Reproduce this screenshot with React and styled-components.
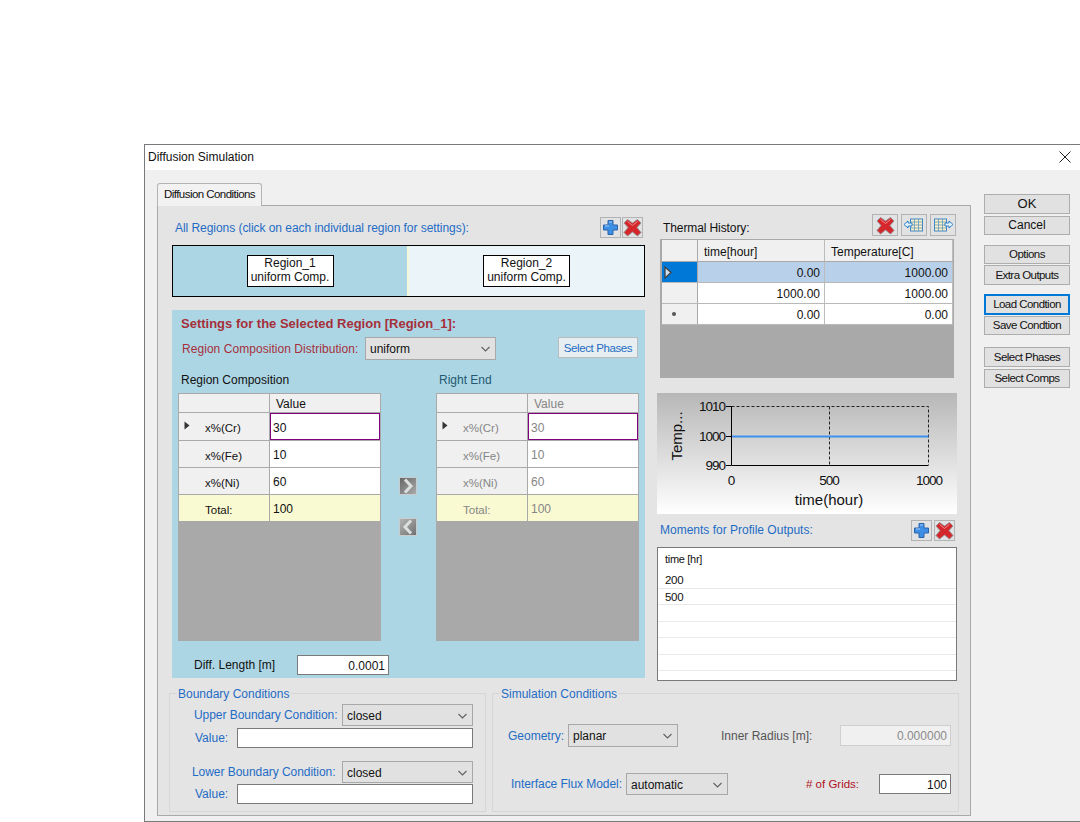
import React from 'react';
import styled, { createGlobalStyle } from 'styled-components';

const GlobalStyle = createGlobalStyle`
  html, body { margin: 0; padding: 0; height: 822px; overflow: hidden; background: #fff; }
  body { font-family: "Liberation Sans", Arial, sans-serif; font-size: 12px; color: #111; }
  * { box-sizing: border-box; }
`;

const BLUE = '#1f6cc4';

const Page = styled.div`
  padding: 144px 0 0 144px;
`;

const Window = styled.div`
  width: 936px;
  height: 678px;
  border: 1px solid #77797c;
  border-right: 0;
  background: #f0f0f0;
`;

const TitleBar = styled.div`
  height: 25px;
  background: #fff;
  display: flex;
  align-items: center;
  justify-content: space-between;
  padding: 0 9px 1px 3px;
  font-size: 12px;
`;

const Body = styled.div`
  display: flex;
  padding: 13px 0 0 12px;
`;

const TabArea = styled.div`
  width: 814px;
`;

const Tab = styled.div`
  width: 105px;
  height: 23px;
  background: #f2f2f2;
  border: 1px solid #b4b4b4;
  border-bottom: 0;
  border-radius: 3px 3px 0 0;
  display: flex;
  align-items: center;
  padding: 0 0 2px 6px;
  font-size: 11.5px;
  letter-spacing: -0.55px;
  margin-bottom: -1px;
  position: relative;
`;

const TabPanel = styled.div`
  height: 611px;
  background: #e4e4e4;
  border: 1px solid #a9a9a9;
  padding: 5px 0 0 11px;
`;

const TopRow = styled.div`
  display: flex;
  gap: 12px;
  padding-left: 3px;
`;

const LeftCol = styled.div`
  width: 473px;
  padding-top: 6px;
`;

const RightCol = styled.div`
  width: 300px;
`;

const HeaderRow = styled.div`
  display: flex;
  align-items: center;
  justify-content: space-between;
  height: ${(p) => p.$h}px;
  padding: ${(p) => p.$pad || '0'};
`;

const BlueLabel = styled.span`
  color: ${BLUE};
  font-size: ${(p) => p.$size || 12}px;
  letter-spacing: ${(p) => p.$track ?? 0}px;
  white-space: nowrap;
`;

const IconGroup = styled.div`
  display: flex;
  gap: ${(p) => p.$gap}px;
`;

const IconButton = styled.button`
  width: ${(p) => p.$w || 21}px;
  height: ${(p) => p.$h || 21}px;
  padding: 0;
  border: 1px solid #b3b3b3;
  background: #e0e2e4;
  display: flex;
  align-items: center;
  justify-content: center;
`;

const RegionBar = styled.div`
  display: flex;
  height: 52px;
  margin-top: 7px;
  border: 1px solid #000;
`;

const RegionZone = styled.div`
  width: ${(p) => p.$w}px;
  flex: ${(p) => (p.$w ? 'none' : '1')};
  background: ${(p) => p.$bg};
  border-left: ${(p) => (p.$seam ? '2px solid #f6f6d8' : '0')};
  display: flex;
  align-items: center;
  justify-content: center;
`;

const RegionBox = styled.div`
  width: 87px;
  height: 32px;
  background: #fff;
  border: 1px solid #000;
  text-align: center;
  line-height: 14px;
  font-size: 12px;
  white-space: nowrap;
`;

const Settings = styled.div`
  height: 368px;
  margin-top: 13px;
  background: #add6e5;
  padding: 7px 6px 0 6px;
`;

const SettingsTitle = styled.div`
  font-weight: bold;
  font-size: 13px;
  line-height: 14px;
  color: #a5303a;
  padding-left: 3px;
`;

const DistRow = styled.div`
  display: flex;
  align-items: center;
  justify-content: space-between;
  margin-top: 6px;
  height: 23px;
  padding: 0 1px 0 4px;
`;

const DistLabel = styled.span`
  width: 183px;
  color: #a5303a;
  font-size: 12px;
  letter-spacing: 0.05px;
  white-space: nowrap;
`;

const Cluster = styled.div`
  display: flex;
  align-items: center;
`;

const SelectBox = styled.div`
  width: ${(p) => p.$w}px;
  height: ${(p) => p.$h || 22}px;
  background: #e1e1e1;
  border: 1px solid #a8a8a8;
  display: flex;
  align-items: center;
  justify-content: space-between;
  padding: 1px 5px 0 4px;
  font-size: 12px;
  color: #111;
`;

const PhaseButton = styled.button`
  width: 80px;
  height: 21px;
  margin-bottom: 2px;
  padding: 0;
  background: #e6eef1;
  border: 1px solid #b9bcbe;
  color: ${BLUE};
  font: 11.5px "Liberation Sans", Arial, sans-serif;
  letter-spacing: -0.4px;
`;

const GridTitles = styled.div`
  display: flex;
  margin-top: 13px;
  line-height: 14px;
  padding-left: 3px;
`;

const GridTitle = styled.div`
  width: ${(p) => p.$w}px;
  font-size: 12px;
  color: ${(p) => p.$c};
`;

const GridsRow = styled.div`
  display: flex;
  margin-top: 6px;
`;

const CompGrid = styled.div`
  width: 203px;
  height: 248px;
  flex: none;
  background: #a9a9a9;
  padding: 1px;
  color: ${(p) => (p.$off ? '#858585' : '#111')};
`;

const CompRow = styled.div`
  display: grid;
  grid-template-columns: 91px 1fr;
  height: ${(p) => p.$h}px;
  background: ${(p) => (p.$total ? '#fafad2' : 'transparent')};
  border-bottom: 1px solid #a9a9a9;
`;

const CompHead = styled.div`
  display: flex;
  align-items: center;
  background: ${(p) => (p.$total ? '#fafad2' : '#f0f0f0')};
  border-right: 1px solid #a9a9a9;
  font-size: 11.5px;
  padding-top: 3px;
`;

const Marker = styled.span`
  width: 26px;
  flex: none;
  padding-left: 5px;
  display: flex;
  margin-top: -6px;
`;

const CompCell = styled.div`
  display: flex;
  align-items: center;
  padding-top: 2px;
  padding-left: ${(p) => (p.$head ? '6px' : p.$focus ? '2px' : '3px')};
  background: ${(p) => (p.$head ? '#f0f0f0' : p.$total ? '#fafad2' : '#fff')};
  border: ${(p) => (p.$focus ? '1.5px solid #800080' : '0')};
  font-size: 12px;
`;

const ArrowCol = styled.div`
  width: 55px;
  flex: none;
  display: flex;
  flex-direction: column;
  align-items: center;
  gap: 23px;
  padding: 84px 1px 0 0;
`;

const ArrowButton = styled.div`
  width: 18px;
  height: 18px;
  background: #c9ccce;
  display: flex;
  align-items: center;
  justify-content: center;
`;

const DiffRow = styled.div`
  display: flex;
  align-items: center;
  margin-top: 14px;
  padding-left: 16px;
`;

const DiffLabel = styled.span`
  width: 103px;
  font-size: 12px;
`;

const Field = styled.div`
  width: ${(p) => p.$w}px;
  height: ${(p) => p.$h || 20}px;
  background: ${(p) => (p.$off ? '#f0f0f0' : '#fff')};
  border: 1px solid ${(p) => (p.$off ? '#cfcfcf' : '#7a7a7a')};
  color: ${(p) => (p.$off ? '#8a8a8a' : '#111')};
  display: flex;
  align-items: center;
  justify-content: flex-end;
  padding: 1px 3px 0 0;
  font-size: 12px;
`;

const ThermalTitle = styled.span`
  font-size: 12px;
  letter-spacing: -0.1px;
  padding: 6px 0 0 6px;
`;

const ThermalGrid = styled.div`
  width: 294px;
  height: 139px;
  margin-left: 3px;
  background: #a9a9a9;
  padding: 1px 1px 0 2px;
`;

const ThermalRow = styled.div`
  display: grid;
  grid-template-columns: 36px 127px 1fr;
  height: ${(p) => p.$h}px;
  border-bottom: 1px solid ${(p) => (p.$head ? '#a9a9a9' : '#b9b9b9')};
`;

const ThermalHead = styled.div`
  background: ${(p) => (p.$active ? '#0078d7' : '#f0f0f0')};
  border-right: 1px solid #a9a9a9;
  display: flex;
  align-items: center;
  padding-left: 2px;
`;

const ThermalCell = styled.div`
  display: flex;
  align-items: center;
  justify-content: ${(p) => (p.$head ? 'flex-start' : 'flex-end')};
  padding: ${(p) => (p.$head ? '2px 0 0 6px' : '1px 4px 0 0')};
  background: ${(p) => (p.$head ? '#f0f0f0' : p.$active ? '#b8d0ea' : '#fff')};
  border-right: 1px solid #bcbcbc;
  font-size: 12px;
`;

const NewRowDot = styled.span`
  width: 4px;
  height: 4px;
  margin-left: 8px;
  border-radius: 50%;
  background: #555;
`;

const ChartBox = styled.div`
  height: 121px;
  margin-top: 15px;
  background: linear-gradient(#b7b7b7, #fff);
`;

const MomentsList = styled.div`
  height: 134px;
  margin-top: 6px;
  background: #fff;
  border: 1px solid #77797c;
  font-size: 11.5px;
`;

const MomentsHead = styled.div`
  height: 24px;
  padding: 5px 0 0 7px;
  letter-spacing: -0.3px;
  font-size: 11px;
`;

const MomentsRow = styled.div`
  height: 16.5px;
  line-height: 16px;
  padding-left: 7px;
  border-bottom: 1px solid #e9e9e9;
  letter-spacing: -0.3px;
`;

const BottomRow = styled.div`
  display: flex;
  gap: 6px;
  margin-top: 5px;
`;

const Group = styled.fieldset`
  width: ${(p) => p.$w}px;
  height: 126px;
  margin: 0;
  padding: 0;
  border: 1px solid #d6d6d6;
  min-width: 0;
`;

const GroupLegend = styled.legend`
  margin-left: 7px;
  padding: 1px 1px 0;
  line-height: 14px;
  color: ${BLUE};
  font-size: 12px;
`;

const BoundaryRow = styled.div`
  display: flex;
  align-items: center;
  justify-content: space-between;
  height: ${(p) => p.$h}px;
  margin-top: ${(p) => p.$top}px;
  padding: 0 12px 0 ${(p) => p.$indent}px;
`;

const SimRow = styled.div`
  display: flex;
  align-items: center;
  justify-content: space-between;
  margin-top: ${(p) => p.$top}px;
  padding: 0 7px 0 ${(p) => p.$indent}px;
`;

const SimLabel = styled.span`
  width: ${(p) => p.$w}px;
  color: ${(p) => p.$c || BLUE};
  font-size: ${(p) => p.$size || 12}px;
  letter-spacing: ${(p) => p.$track ?? 0}px;
  white-space: nowrap;
`;

const Buttons = styled.div`
  width: 86px;
  margin-left: 13px;
  padding-top: 11px;
  display: flex;
  flex-direction: column;
`;

const SideButton = styled.button`
  width: 86px;
  height: ${(p) => p.$h || 20}px;
  margin-top: ${(p) => p.$top || 0}px;
  padding: 0 0 1px;
  background: #e1e1e1;
  border: ${(p) => (p.$focus ? '2px solid #0078d7' : '1px solid #adadad')};
  color: #111;
  font: ${(p) => p.$size || 11.5}px "Liberation Sans", Arial, sans-serif;
  letter-spacing: ${(p) => p.$track ?? -0.55}px;
`;

const Chevron = () => (
  <svg width="9" height="6" viewBox="0 0 9 6">
    <path d="M0.5 1 L4.5 5 L8.5 1" fill="none" stroke="#606060" strokeWidth="1.1" />
  </svg>
);

const PlusIcon = () => (
  <svg width="17" height="17" viewBox="0 0 17 17">
    <path d="M6 1.5 H11 V6 H15.5 V11 H11 V15.5 H6 V11 H1.5 V6 H6 Z" fill="#3d8fe6" stroke="#2a62a8" strokeWidth="1" />
    <path d="M7 3 H10 M3 7 H7" stroke="#a6d0f7" strokeWidth="1.2" fill="none" />
  </svg>
);

const CrossIcon = () => (
  <svg width="19" height="19" viewBox="0 0 19 19">
    <path d="M4.5 1.5 L9.5 5 L14.5 1.5 L18 5 L14 9.5 L18 14.5 L14.5 18 L9.5 14 L4.5 18 L1 14.5 L5 9.5 L1 5 Z" fill="#d4262b" stroke="#9a8f90" strokeWidth="1" strokeLinejoin="round" />
    <path d="M4.5 3.5 L9.5 7.5 L14.5 3.5" stroke="#f08a8a" strokeWidth="1" fill="none" />
  </svg>
);

const TableIcon = ({ dir }) => (
  <svg width="22" height="16" viewBox="0 0 22 16">
    <g transform={dir === 'in' ? 'translate(7 1.5)' : 'translate(2 1.5)'}>
      <rect x="0.5" y="0.5" width="12" height="12" fill="#fbf0c4" stroke="#3f86c6" />
      <path d="M0.5 3.5 H12.5 M0.5 6.5 H12.5 M0.5 9.5 H12.5 M4.5 0.5 V12.5 M8.5 0.5 V12.5" stroke="#5f98c4" strokeWidth="0.8" />
    </g>
    {dir === 'in' ? (
      <path d="M1 7.5 L5 4 V6 H9 V9 H5 V11 Z" fill="#e4f2fc" stroke="#1f77c4" strokeWidth="0.9" />
    ) : (
      <path d="M21 7.5 L17 4 V6 H13 V9 H17 V11 Z" fill="#e4f2fc" stroke="#1f77c4" strokeWidth="0.9" />
    )}
  </svg>
);

const ArrowIcon = ({ back }) => (
  <svg width="16" height="16" viewBox="0 0 16 16">
    <defs>
      <linearGradient id={back ? 'gb' : 'gf'} x1="0" x2="1" y1="0" y2="1">
        <stop offset="0" stopColor={back ? '#b4b4b4' : '#666'} />
        <stop offset="1" stopColor={back ? '#707070' : '#aaa'} />
      </linearGradient>
    </defs>
    <rect width="16" height="16" fill={`url(#${back ? 'gb' : 'gf'})`} />
    <path d={back ? 'M11 1.5 L5 8 L11 14.5' : 'M5 1.5 L11 8 L5 14.5'} fill="none" stroke="#dcdfe0" strokeWidth="3" />
  </svg>
);

const RowMarker = () => (
  <svg width="6" height="9" viewBox="0 0 6 9">
    <path d="M0.5 0.5 L5.5 4.5 L0.5 8.5 Z" fill="#333" />
  </svg>
);

const CloseIcon = () => (
  <svg width="12" height="12" viewBox="0 0 12 12">
    <path d="M0.5 0.5 L11.5 11.5 M11.5 0.5 L0.5 11.5" stroke="#222" strokeWidth="1" />
  </svg>
);

const TempChart = () => (
  <svg width="300" height="121" viewBox="0 0 300 121">
    <g fontFamily="Liberation Sans, Arial, sans-serif" fill="#111">
      <g fontSize="13.5" letterSpacing="-1" textAnchor="end">
        <text x="68" y="18">1010</text>
        <text x="68" y="48">1000</text>
        <text x="68" y="77">990</text>
      </g>
      <g fontSize="13.5" letterSpacing="-1" textAnchor="middle">
        <text x="74" y="92">0</text>
        <text x="172" y="92">500</text>
        <text x="272" y="92">1000</text>
      </g>
      <text x="172" y="112" fontSize="15" textAnchor="middle">time(hour)</text>
      <text x="0" y="0" fontSize="15" textAnchor="middle" transform="translate(25 43) rotate(-90)">Temp...</text>
    </g>
    <path d="M74.5 13.5 H271.5 V72 M172.5 13.5 V72" fill="none" stroke="#222" strokeWidth="1" strokeDasharray="3 2" />
    <path d="M74.5 13 V72.5 H271.5 M69 13.5 H74 M69 43.5 H74 M69 72.5 H74" fill="none" stroke="#000" strokeWidth="1" />
    <path d="M75 43.5 H271.5" stroke="#3f8fee" strokeWidth="2" />
  </svg>
);

const composition = [
  { name: 'x%(Cr)', value: '30', marker: true, focus: true, h: 28 },
  { name: 'x%(Fe)', value: '10', h: 27 },
  { name: 'x%(Ni)', value: '60', h: 27 },
  { name: 'Total:', value: '100', total: true, h: 27 },
];

const thermal = [
  { time: '0.00', temp: '1000.00', active: true },
  { time: '1000.00', temp: '1000.00' },
  { time: '0.00', temp: '0.00', fresh: true },
];

const CompositionGrid = ({ off }) => (
  <CompGrid $off={off}>
    <CompRow $h={19}>
      <CompHead />
      <CompCell $head>Value</CompCell>
    </CompRow>
    {composition.map((row) => (
      <CompRow key={row.name} $h={row.h} $total={row.total}>
        <CompHead $total={row.total}>
          <Marker>{row.marker && <RowMarker />}</Marker>
          {row.name}
        </CompHead>
        <CompCell $focus={row.focus} $total={row.total}>{row.value}</CompCell>
      </CompRow>
    ))}
  </CompGrid>
);

export default function App() {
  return (
    <Page>
      <GlobalStyle />
      <Window>
        <TitleBar>
          Diffusion Simulation
          <CloseIcon />
        </TitleBar>
        <Body>
          <TabArea>
            <Tab>Diffusion Conditions</Tab>
            <TabPanel>
              <TopRow>
                <LeftCol>
                  <HeaderRow $h={21} $pad="0 2px 0 3px">
                    <BlueLabel $track={-0.05}>All Regions (click on each individual region for settings):</BlueLabel>
                    <IconGroup $gap={1}>
                      <IconButton><PlusIcon /></IconButton>
                      <IconButton><CrossIcon /></IconButton>
                    </IconGroup>
                  </HeaderRow>
                  <RegionBar>
                    <RegionZone $w={234} $bg="#add6e5"><RegionBox>Region_1<br />uniform Comp.</RegionBox></RegionZone>
                    <RegionZone $seam $bg="#ebf4f9"><RegionBox>Region_2<br />uniform Comp.</RegionBox></RegionZone>
                  </RegionBar>
                  <Settings>
                    <SettingsTitle>Settings for the Selected Region [Region_1]:</SettingsTitle>
                    <DistRow>
                      <Cluster>
                        <DistLabel>Region Composition Distribution:</DistLabel>
                        <SelectBox $w={131} $h={23}>uniform<Chevron /></SelectBox>
                      </Cluster>
                      <PhaseButton>Select Phases</PhaseButton>
                    </DistRow>
                    <GridTitles>
                      <GridTitle $w={258} $c="#111">Region Composition</GridTitle>
                      <GridTitle $w={100} $c="#245a70">Right End</GridTitle>
                    </GridTitles>
                    <GridsRow>
                      <CompositionGrid />
                      <ArrowCol>
                        <ArrowButton><ArrowIcon /></ArrowButton>
                        <ArrowButton><ArrowIcon back /></ArrowButton>
                      </ArrowCol>
                      <CompositionGrid off />
                    </GridsRow>
                    <DiffRow>
                      <DiffLabel>Diff. Length [m]</DiffLabel>
                      <Field $w={92}>0.0001</Field>
                    </DiffRow>
                  </Settings>
                </LeftCol>
                <RightCol>
                  <HeaderRow $h={28} $pad="0 1px 0 0">
                    <ThermalTitle>Thermal History:</ThermalTitle>
                    <IconGroup $gap={3}>
                      <IconButton $w={26} $h={22}><CrossIcon /></IconButton>
                      <IconButton $w={26} $h={22}><TableIcon dir="in" /></IconButton>
                      <IconButton $w={26} $h={22}><TableIcon dir="out" /></IconButton>
                    </IconGroup>
                  </HeaderRow>
                  <ThermalGrid>
                    <ThermalRow $h={22} $head>
                      <ThermalHead />
                      <ThermalCell $head>time[hour]</ThermalCell>
                      <ThermalCell $head>Temperature[C]</ThermalCell>
                    </ThermalRow>
                    {thermal.map((row, i) => (
                      <ThermalRow key={i} $h={21}>
                        <ThermalHead $active={row.active}>
                          {row.active && (
                            <svg width="8" height="13" viewBox="0 0 8 13">
                              <path d="M1 1 L7 6.5 L1 12 Z" fill="#cfe0f0" stroke="#444" strokeWidth="1.3" />
                            </svg>
                          )}
                          {row.fresh && <NewRowDot />}
                        </ThermalHead>
                        <ThermalCell $active={row.active}>{row.time}</ThermalCell>
                        <ThermalCell $active={row.active}>{row.temp}</ThermalCell>
                      </ThermalRow>
                    ))}
                  </ThermalGrid>
                  <ChartBox><TempChart /></ChartBox>
                  <HeaderRow $h={27} $pad="5px 2px 0 3px">
                    <BlueLabel>Moments for Profile Outputs:</BlueLabel>
                    <IconGroup $gap={2}>
                      <IconButton><PlusIcon /></IconButton>
                      <IconButton><CrossIcon /></IconButton>
                    </IconGroup>
                  </HeaderRow>
                  <MomentsList>
                    <MomentsHead>time [hr]</MomentsHead>
                    {['200', '500', '', '', '', ''].map((v, i) => (
                      <MomentsRow key={i}>{v}</MomentsRow>
                    ))}
                  </MomentsList>
                </RightCol>
              </TopRow>
              <BottomRow>
                <Group $w={317}>
                  <GroupLegend>Boundary Conditions</GroupLegend>
                  <BoundaryRow $h={22} $top={3} $indent={24}>
                    <BlueLabel $track={-0.05}>Upper Boundary Condition:</BlueLabel>
                    <SelectBox $w={131}>closed<Chevron /></SelectBox>
                  </BoundaryRow>
                  <BoundaryRow $h={20} $top={2} $indent={25}>
                    <BlueLabel>Value:</BlueLabel>
                    <Field $w={236} />
                  </BoundaryRow>
                  <BoundaryRow $h={22} $top={13} $indent={22}>
                    <BlueLabel $track={-0.05}>Lower Boundary Condition:</BlueLabel>
                    <SelectBox $w={131}>closed<Chevron /></SelectBox>
                  </BoundaryRow>
                  <BoundaryRow $h={20} $top={1} $indent={25}>
                    <BlueLabel>Value:</BlueLabel>
                    <Field $w={236} />
                  </BoundaryRow>
                </Group>
                <Group $w={467}>
                  <GroupLegend>Simulation Conditions</GroupLegend>
                  <SimRow $top={23} $indent={15}>
                    <Cluster>
                      <SimLabel $w={60}>Geometry:</SimLabel>
                      <SelectBox $w={110} $h={23}>planar<Chevron /></SelectBox>
                    </Cluster>
                    <Cluster>
                      <SimLabel $w={119} $c="#555">Inner Radius [m]:</SimLabel>
                      <Field $w={111} $h={21} $off>0.000000</Field>
                    </Cluster>
                  </SimRow>
                  <SimRow $top={26} $indent={18}>
                    <Cluster>
                      <SimLabel $w={115} $track={-0.05}>Interface Flux Model:</SimLabel>
                      <SelectBox $w={102}>automatic<Chevron /></SelectBox>
                    </Cluster>
                    <Cluster>
                      <SimLabel $w={73} $c="#b01224" $size={11.5}>&#35; of Grids:</SimLabel>
                      <Field $w={72}>100</Field>
                    </Cluster>
                  </SimRow>
                </Group>
              </BottomRow>
            </TabPanel>
          </TabArea>
          <Buttons>
            <SideButton $size={13} $track={0}>OK</SideButton>
            <SideButton $h={19} $top={2} $size={12} $track={0}>Cancel</SideButton>
            <SideButton $h={19} $top={10}>Options</SideButton>
            <SideButton $top={1}>Extra Outputs</SideButton>
            <SideButton $h={21} $top={9} $focus>Load Condtion</SideButton>
            <SideButton $h={19} $top={1}>Save Condtion</SideButton>
            <SideButton $top={12}>Select Phases</SideButton>
            <SideButton $h={19} $top={2}>Select Comps</SideButton>
          </Buttons>
        </Body>
      </Window>
    </Page>
  );
}
